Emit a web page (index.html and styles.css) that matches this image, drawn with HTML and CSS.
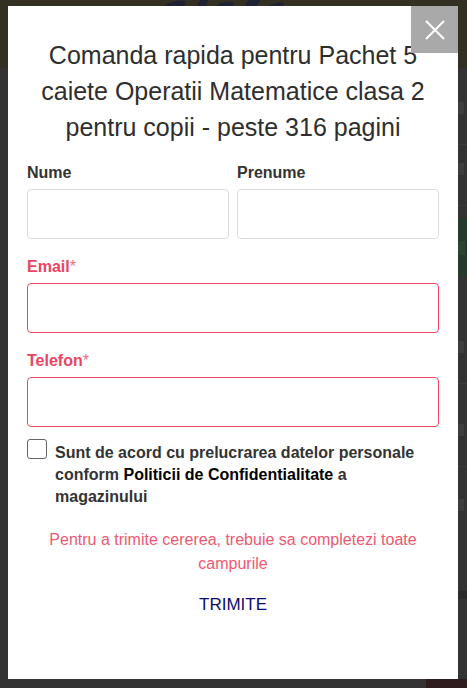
FILE: index.html
```html
<!DOCTYPE html>
<html lang="ro">
<head>
<meta charset="utf-8">
<title>Comanda rapida</title>
<link rel="stylesheet" href="styles.css">
</head>
<body>
<div class="page">
  <header class="site-header">
    <svg class="logo" width="140" height="8" viewBox="0 0 140 8" aria-hidden="true">
      <path d="M8 8 C10 2 20 0 30 1 L28 8 Z" fill="#1e2233"/>
      <path d="M40 8 L44 0 L52 0 L49 8 Z" fill="#1e2233"/>
      <path d="M58 8 C60 3 70 1 78 2 L76 8 Z" fill="#1e2233"/>
      <path d="M88 8 L92 0 L104 0 L100 8 Z" fill="#1e2233"/>
      <path d="M112 8 C114 3 122 2 128 3 L126 8 Z" fill="#1e2233"/>
    </svg>
  </header>
  <div class="page-body">
    <aside class="side">
      <div class="side-mark m1"></div>
      <div class="side-line"></div>
      <div class="side-mark m2"></div>
      <div class="side-line"></div>
      <div class="side-green"><span class="green-mark"></span></div>
      <div class="side-mark m3"></div>
      <div class="side-line"></div>
      <div class="side-mark m4"></div>
      <div class="side-line"></div>
      <div class="side-mark m5"></div>
      <div class="side-bar"></div>
    </aside>
  </div>
  <div class="corner"></div>
</div>

<div class="overlay">
  <div class="modal">
    <button class="close" type="button" aria-label="Inchide">
      <svg width="20" height="20" viewBox="0 0 20 20"><path d="M1 1 L19 19 M19 1 L1 19" stroke="#fff" stroke-width="2" fill="none"/></svg>
    </button>
    <h2 class="title">Comanda rapida pentru Pachet 5 caiete Operatii Matematice clasa 2 pentru copii - peste 316 pagini</h2>
    <form class="form">
      <div class="row two">
        <div class="field">
          <label class="label">Nume</label>
          <input class="input" type="text">
        </div>
        <div class="field">
          <label class="label">Prenume</label>
          <input class="input" type="text">
        </div>
      </div>
      <div class="row">
        <div class="field">
          <label class="label req">Email<span class="star">*</span></label>
          <input class="input err" type="text">
        </div>
      </div>
      <div class="row">
        <div class="field">
          <label class="label req">Telefon<span class="star">*</span></label>
          <input class="input err" type="text">
        </div>
      </div>
      <div class="agree">
        <span class="checkbox"></span>
        <p class="agree-text">Sunt de acord cu prelucrarea datelor personale conform <span class="policy">Politicii de Confidentialitate</span> a magazinului</p>
      </div>
      <p class="error">Pentru a trimite cererea, trebuie sa completezi toate campurile</p>
      <div class="submit-wrap"><button class="submit" type="button">TRIMITE</button></div>
    </form>
  </div>
</div>
</body>
</html>
```

FILE: styles.css
```css
* { box-sizing: border-box; }
html, body { margin: 0; padding: 0; }
body {
  width: 467px;
  height: 688px;
  overflow: hidden;
  background: #333333;
  font-family: "Liberation Sans", Arial, sans-serif;
}
.page { width: 467px; height: 688px; display: flex; flex-direction: column; }
.site-header {
  height: 68px;
  background: #342f23;
  display: flex;
  justify-content: center;
  align-items: flex-start;
}
.logo { display: block; margin-left: -16px; }
.page-body { flex: 1; display: flex; justify-content: flex-end; }
.side { width: 9px; display: flex; flex-direction: column; overflow: hidden; }
.side-mark { width: 6px; height: 12px; background: #3e3e3e; }
.m1 { margin-top: 34px; }
.m2 { margin-top: 18px; }
.m3 { margin-top: 44px; }
.m4 { margin-top: 40px; }
.m5 { margin-top: 32px; }
.side-line { height: 1px; background: #3c3c3c; margin-top: 30px; }
.side-green { margin-top: 12px; height: 59px; background: #263a2b; margin-bottom: 20px; display: flex; align-items: center; }
.green-mark { width: 7px; height: 14px; background: #2d4634; border-radius: 4px 0 0 4px; }
.side-bar { margin-top: 80px; height: 8px; background: #2a2a2a; }
.corner { position: absolute; right: 0; bottom: 0; width: 41px; height: 9px; background: #2e1c1f; }

.overlay {
  position: fixed;
  inset: 0;
  padding: 6px 0 0 8px;
}
.modal {
  position: relative;
  width: 450px;
  height: 673px;
  background: #ffffff;
  padding: 31px 19px 0 19px;
}
.close {
  position: absolute;
  top: 0;
  right: 0;
  width: 47px;
  height: 47px;
  border: 0;
  padding: 0;
  background: #a9a9a9;
  display: flex;
  align-items: center;
  justify-content: center;
}
.close svg { display: block; }
.title {
  margin: 0;
  font-size: 25px;
  line-height: 36px;
  font-weight: normal;
  text-align: center;
  color: #2e2e2e;
}
.form { margin-top: 18px; }
.row { margin-bottom: 18.5px; }
.row.two { display: grid; grid-template-columns: 1fr 1fr; column-gap: 8px; }
.field { display: flex; flex-direction: column; }
.label {
  font-size: 16px;
  line-height: 20px;
  font-weight: bold;
  color: #333333;
  margin-bottom: 6px;
}
.label.req { color: #e9455e; }
.star { font-weight: normal; color: #ee6f80; }
.input {
  height: 49.5px;
  width: 100%;
  border: 1px solid #dcdcdc;
  border-radius: 4px;
  background: #fff;
  font: inherit;
}
.input.err { border-color: #ea4a61; }
.agree {
  display: flex;
  align-items: flex-start;
  gap: 8px;
  margin-top: -6px;
}
.checkbox {
  flex: none;
  width: 20px;
  height: 20px;
  border: 1.5px solid #666666;
  border-radius: 3px;
  background: #fff;
}
.agree-text {
  margin: 3px 0 0 0;
  font-size: 16px;
  line-height: 22px;
  font-weight: bold;
  color: #333333;
}
.policy { color: #000000; }
.error {
  margin: 20px 0 0 0;
  text-align: center;
  font-size: 16px;
  line-height: 24px;
  color: #ef5870;
}
.submit-wrap { margin-top: 17px; text-align: center; }
.submit {
  border: 0;
  background: none;
  padding: 0;
  font-family: "Liberation Sans", Arial, sans-serif;
  font-size: 17px;
  line-height: 24px;
  color: #0c0c6e;
}
```
